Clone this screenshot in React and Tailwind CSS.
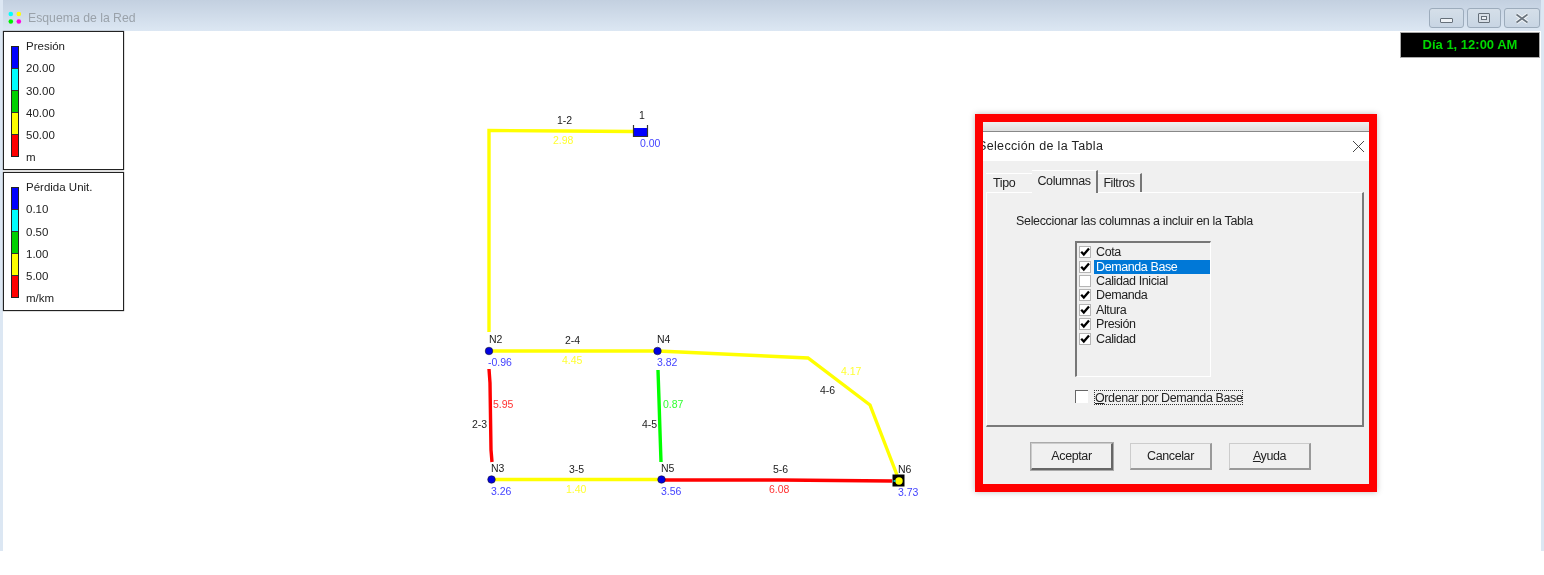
// Esquema de la Red - EPANET style network map with table selection dialog
const legendColors = ['bg-[#0000ff]', 'bg-[#00ffff]', 'bg-[#00d000]', 'bg-[#ffff00]', 'bg-[#ff0000]']

const sans = "font-['Liberation_Sans',Arial,sans-serif]"

function Legend({ title, values, unit }) {
  return (
    <div className="flex h-[139px] w-[121px] gap-[7px] border border-[#222] bg-white pl-[7px] pt-[14px] shadow-[0_0_1px_#444]">
      <div className="flex h-[111px] w-[8px] flex-col border border-[#222]">
        {legendColors.map((c) => (
          <div key={c} className={`flex-1 border-b border-[#333] last:border-b-0 ${c}`} />
        ))}
      </div>
      <div className="-mt-[11px] flex flex-col text-[11.5px] leading-[22.3px] text-[#222]">
        <span>{title}</span>
        {values.map((v) => (
          <span key={v}>{v}</span>
        ))}
        <span>{unit}</span>
      </div>
    </div>
  )
}

const pipes = [
  { color: '#ffff00', points: '633,131.5 565,131 489,130.5 489,332' },
  { color: '#ffff00', points: '490,351 658,351 680,352 808,358 870,405 897,475' },
  { color: '#ff0000', points: '489,369 490,383 491,450 492,462' },
  { color: '#00ff00', points: '658,370 659,400 660,432 661,462' },
  { color: '#ffff00', points: '492,479.5 662,479.5' },
  { color: '#ff0000', points: '662,480 780,480 892,481' },
]

const labels = [
  { t: '1-2', x: 557, y: 114, c: 'text-[#222]' },
  { t: '2.98', x: 553, y: 134, c: 'text-[#ffff33]' },
  { t: '1', x: 639, y: 109, c: 'text-[#222]' },
  { t: '0.00', x: 640, y: 137, c: 'text-[#4444ff]' },
  { t: 'N2', x: 489, y: 333, c: 'text-[#222]' },
  { t: '2-4', x: 565, y: 334, c: 'text-[#222]' },
  { t: 'N4', x: 657, y: 333, c: 'text-[#222]' },
  { t: '-0.96', x: 488, y: 356, c: 'text-[#4444ff]' },
  { t: '4.45', x: 562, y: 354, c: 'text-[#ffff33]' },
  { t: '3.82', x: 657, y: 356, c: 'text-[#4444ff]' },
  { t: '5.95', x: 493, y: 398, c: 'text-[#ff3333]' },
  { t: '2-3', x: 472, y: 418, c: 'text-[#222]' },
  { t: '0.87', x: 663, y: 398, c: 'text-[#33ff33]' },
  { t: '4-5', x: 642, y: 418, c: 'text-[#222]' },
  { t: 'N3', x: 491, y: 462, c: 'text-[#222]' },
  { t: '3-5', x: 569, y: 463, c: 'text-[#222]' },
  { t: 'N5', x: 661, y: 462, c: 'text-[#222]' },
  { t: '3.26', x: 491, y: 485, c: 'text-[#4444ff]' },
  { t: '1.40', x: 566, y: 483, c: 'text-[#ffff33]' },
  { t: '3.56', x: 661, y: 485, c: 'text-[#4444ff]' },
  { t: '4.17', x: 841, y: 365, c: 'text-[#ffff33]' },
  { t: '4-6', x: 820, y: 384, c: 'text-[#222]' },
  { t: '5-6', x: 773, y: 463, c: 'text-[#222]' },
  { t: '6.08', x: 769, y: 483, c: 'text-[#ff3333]' },
  { t: 'N6', x: 898, y: 463, c: 'text-[#222]' },
  { t: '3.73', x: 898, y: 486, c: 'text-[#4444ff]' },
]

function NetworkMap() {
  return (
    <>
      <svg className="absolute left-0 top-0" width="1544" height="575" fill="none">
        {pipes.map((p) => (
          <polyline key={p.points} points={p.points} stroke={p.color} strokeWidth="3.4" />
        ))}
        {/* tank */}
        <rect x="633.5" y="128" width="14" height="8" fill="#0000ff" />
        <path d="M633.5 125V136.5H647.5V125" stroke="#333" strokeWidth="1.2" />
        {/* junctions */}
        <circle cx="489" cy="351" r="3.8" fill="#0000e0" stroke="#111" strokeWidth="0.5" />
        <circle cx="657.5" cy="351" r="3.8" fill="#0000e0" stroke="#111" strokeWidth="0.5" />
        <circle cx="491.5" cy="479.5" r="3.8" fill="#0000e0" stroke="#111" strokeWidth="0.5" />
        <circle cx="661.5" cy="479.5" r="3.8" fill="#0000e0" stroke="#111" strokeWidth="0.5" />
        {/* selected node N6 */}
        <rect x="892.5" y="474.5" width="12" height="12" fill="#000" />
        <circle cx="899" cy="481" r="3.7" fill="#ffff00" />
        <path d="M893.5 481H895.5" stroke="#00ffff" strokeWidth="1.5" />
      </svg>
      {labels.map((l) => (
        <span
          key={l.t + l.x}
          className={`absolute text-[10.5px] leading-[12px] ${l.c}`}
          style={{ left: l.x, top: l.y }}
        >
          {l.t}
        </span>
      ))}
    </>
  )
}

function TitleBar() {
  return (
    <div className="flex h-[31px] items-start justify-between bg-gradient-to-b from-[#c3d0e0] to-[#dce7f3] pl-[5px] pr-[1px]">
      <div className="mt-[10px] flex items-center gap-[6px]">
        <svg width="14" height="14" viewBox="0 0 14 14">
          <circle cx="2.8" cy="3" r="2.3" fill="#00ffff" />
          <circle cx="10.8" cy="3" r="2.3" fill="#ffff00" />
          <circle cx="2.8" cy="10.5" r="2.3" fill="#00f000" />
          <circle cx="10.8" cy="10.5" r="2.3" fill="#ff00e0" />
        </svg>
        <span className="text-[12.25px] leading-[16px] text-[#9aa2aa]">Esquema de la Red</span>
      </div>
      <div className="mt-[8px] flex gap-[3px]">
        <WinButton width="w-[35px]" align="items-end pb-[4px]">
          <div className="h-[5px] w-[13px] rounded-[1px] border border-[#66707a] bg-[#eef2f6]" />
        </WinButton>
        <WinButton width="w-[34px]" align="items-center">
          <div className="flex h-[10px] w-[12px] items-center justify-center rounded-[1px] border border-[#66707a] bg-[#d8dfe7]">
            <div className="h-[4px] w-[6px] border border-[#66707a] bg-[#eef2f6]" />
          </div>
        </WinButton>
        <WinButton width="w-[36px]" align="items-center">
          <svg width="16" height="11" viewBox="0 0 16 11" fill="none">
            <path d="M2.5 1.5L13.5 9.5M13.5 1.5L2.5 9.5" stroke="#f2f5f8" strokeWidth="3.8" />
            <path d="M2.5 1.5L13.5 9.5M13.5 1.5L2.5 9.5" stroke="#6a747e" strokeWidth="1.6" />
          </svg>
        </WinButton>
      </div>
    </div>
  )
}

function WinButton({ children, width, align }) {
  return (
    <div className={`flex h-[20px] justify-center rounded-[3px] border border-[#9dacbc] bg-gradient-to-b from-[#d5dfe9] to-[#c8d5e3] ${width} ${align}`}>
      {children}
    </div>
  )
}

const columns = [
  { name: 'Cota', checked: true },
  { name: 'Demanda Base', checked: true, selected: true },
  { name: 'Calidad Inicial', checked: false },
  { name: 'Demanda', checked: true },
  { name: 'Altura', checked: true },
  { name: 'Presión', checked: true },
  { name: 'Calidad', checked: true },
]

function Check({ checked, className }) {
  return (
    <div className={`flex h-[12px] w-[12px] shrink-0 items-center justify-center border border-[#b5b5b5] bg-white ${className}`}>
      {checked && (
        <svg width="10" height="10" viewBox="0 0 10 10" fill="none">
          <path d="M1.2 4.8L3.8 7.6L9 1.6" stroke="#000" strokeWidth="2.3" />
        </svg>
      )}
    </div>
  )
}

function Dialog() {
  return (
    <div className="absolute left-[975px] top-[114px] flex h-[378px] w-[402px] flex-col overflow-hidden border-8 border-[#ff0000] bg-[#f0f0f0] text-[12.5px] tracking-[-0.4px] text-[#222] shadow-[0_0_6px_rgba(0,0,0,0.25)]">
      <div className="h-[9px] bg-gradient-to-b from-[#f0f0f0] to-[#dedede]" />
      <div className="h-px bg-[#888]" />
      <div className="flex h-[29px] items-center justify-between bg-white pr-[4px]">
        <span className="-ml-[5px] text-[12.5px] tracking-[0.35px]">Selección de la Tabla</span>
        <svg width="13" height="13" viewBox="0 0 13 13" fill="none">
          <path d="M1 1L12 12M12 1L1 12" stroke="#333" strokeWidth="0.9" />
        </svg>
      </div>

      <div className="ml-[3px] mt-[9px] flex h-[22px] items-end">
        <div className="flex h-[19px] w-[46px] items-center border-t border-[#fff] pl-[7px]">Tipo</div>
        <div className="z-10 -mb-[1px] flex h-[23px] w-[66px] items-center justify-center border-r-2 border-t border-r-[#777] border-t-white bg-[#f0f0f0] pb-[2px]">Columnas</div>
        <div className="flex h-[19px] w-[44px] items-center justify-center border-r-2 border-t border-r-[#777] border-t-white">Filtros</div>
      </div>

      <div className="ml-[3px] h-[235px] w-[378px] border-b-2 border-l border-r-2 border-t border-b-[#7a7a7a] border-l-white border-r-[#7a7a7a] border-t-white">
        <p className="ml-[29px] mt-[21px] leading-[14px] tracking-[-0.33px]">Seleccionar las columnas a incluir en la Tabla</p>
        <div className="ml-[88px] mt-[13px] h-[136px] w-[136px] border-b border-l-2 border-r border-t-2 border-b-white border-l-[#777] border-r-white border-t-[#777] pt-[2px]">
          {columns.map((col) => (
            <div key={col.name} className="flex h-[14.4px] items-center">
              <Check checked={col.checked} className="ml-[2px] mr-[3px]" />
              <span className={`flex-1 pl-[2px] leading-[14px] ${col.selected ? 'bg-[#0078d7] text-white' : ''}`}>{col.name}</span>
            </div>
          ))}
        </div>
        <div className="ml-[88px] mt-[13px] flex items-start">
          <div className="h-[13px] w-[13px] border-l border-t border-[#666] border-b-white border-r-white bg-white" />
          <span className="ml-[6px] h-[15px] border border-dotted border-[#333] leading-[14px]">
            <span className="underline">O</span>rdenar por Demanda Base
          </span>
        </div>
      </div>

      <div className="ml-[48px] mt-[16px] flex gap-[17px]">
        <DialogButton isDefault>Aceptar</DialogButton>
        <DialogButton>Cancelar</DialogButton>
        <DialogButton>
          <span className="underline">A</span>yuda
        </DialogButton>
      </div>
    </div>
  )
}

function DialogButton({ children, isDefault }) {
  return (
    <button
      className={`flex h-[27px] w-[82px] items-center justify-center border-l border-t border-l-[#ccc] border-t-[#ccc] bg-[#f0f0f0] ${
        isDefault ? 'border-b-[2px] border-r-[2px] border-b-[#666] border-r-[#666] shadow-[0_0_0_1px_#aaa]' : 'border-b-2 border-r-2 border-b-[#999] border-r-[#999]'
      }`}
    >
      <span>{children}</span>
    </button>
  )
}

export default function App() {
  return (
    <div className={`relative h-[575px] w-[1544px] overflow-hidden bg-white blur-[0.45px] ${sans}`}>
      <div className="flex h-[551px] flex-col border-x-[3px] border-x-[#dce7f3] bg-white">
        <TitleBar />
        <div className="relative flex-1">
          <div className="flex w-[121px] flex-col gap-[2px]">
            <Legend title="Presión" values={['20.00', '30.00', '40.00', '50.00']} unit="m" />
            <Legend title="Pérdida Unit." values={['0.10', '0.50', '1.00', '5.00']} unit="m/km" />
          </div>
          <div className="absolute right-[1px] top-[1px] flex h-[26px] w-[140px] items-center justify-center border border-[#aaa] bg-black text-[13px] font-bold text-[#00d800]">
            Día 1, 12:00 AM
          </div>
        </div>
      </div>
      <NetworkMap />
      <Dialog />
    </div>
  )
}
